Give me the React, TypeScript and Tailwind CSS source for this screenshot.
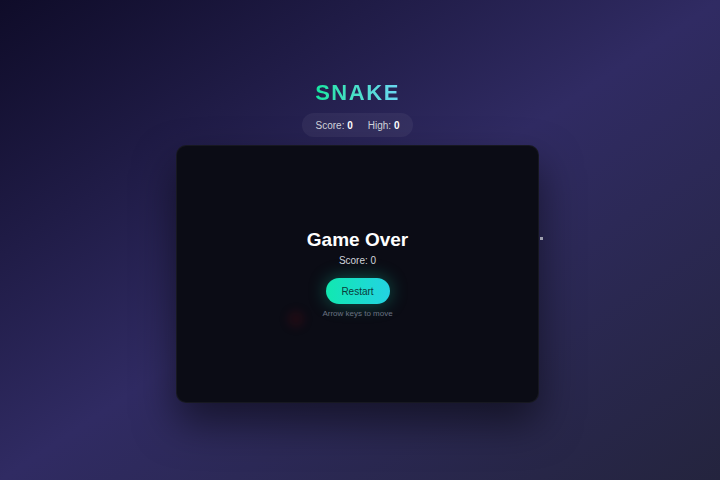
import { useState } from 'react';

export default function App() {
  const [score] = useState(0);
  const [high] = useState(0);

  return (
    <div
      className="min-h-screen w-full flex flex-col items-center justify-center pr-[5px] pt-[2px] bg-gradient-to-br from-[#0f0c29] via-[#302b63] to-[#24243e]"
      style={{ fontFamily: '"Liberation Sans", Arial, sans-serif' }}
    >
      {/* Title */}
      <h1 className="text-[22px] leading-[28px] font-bold tracking-[0.07em] bg-gradient-to-r from-[#0fe6a0] to-[#6ad6f2] bg-clip-text text-transparent">
        SNAKE
      </h1>

      {/* Score pill */}
      <div className="mt-[6px] h-[24px] px-[14px] flex items-center gap-[15px] rounded-full bg-white/5 text-[10px] text-gray-300">
        <span>
          Score: <span className="font-bold text-white">{score}</span>
        </span>
        <span>
          High: <span className="font-bold text-white">{high}</span>
        </span>
      </div>

      {/* Board */}
      <div className="relative mt-[8px] w-[363px] h-[258px] rounded-[10px] bg-[#0b0c15] border border-white/5 shadow-[0_20px_40px_rgba(0,0,0,0.5)]">
        {/* food glow */}
        <div className="absolute left-[111px] top-[165px] w-[16px] h-[16px] rounded-full bg-red-800/15 blur-[5px]" />

        <div className="absolute inset-0 flex flex-col items-center justify-center">
          <h2 className="text-[19px] leading-[24px] font-bold text-white">Game Over</h2>
          <p className="mt-[2px] text-[10px] leading-[14px] text-gray-300">Score: {score}</p>
          <button className="mt-[10px] h-[26px] w-[64px] rounded-full bg-gradient-to-r from-[#12e8b0] to-[#24d2e2] text-[10px] text-[#0b3b3a] shadow-[0_0_18px_rgba(20,230,180,0.35)]">
            Restart
          </button>
          <p className="mt-[4px] text-[8px] leading-[12px] text-gray-500">Arrow keys to move</p>
        </div>

        <div className="absolute right-[-5px] top-[91px] w-[3px] h-[3px] bg-gray-300/70" />
      </div>
    </div>
  );
}
